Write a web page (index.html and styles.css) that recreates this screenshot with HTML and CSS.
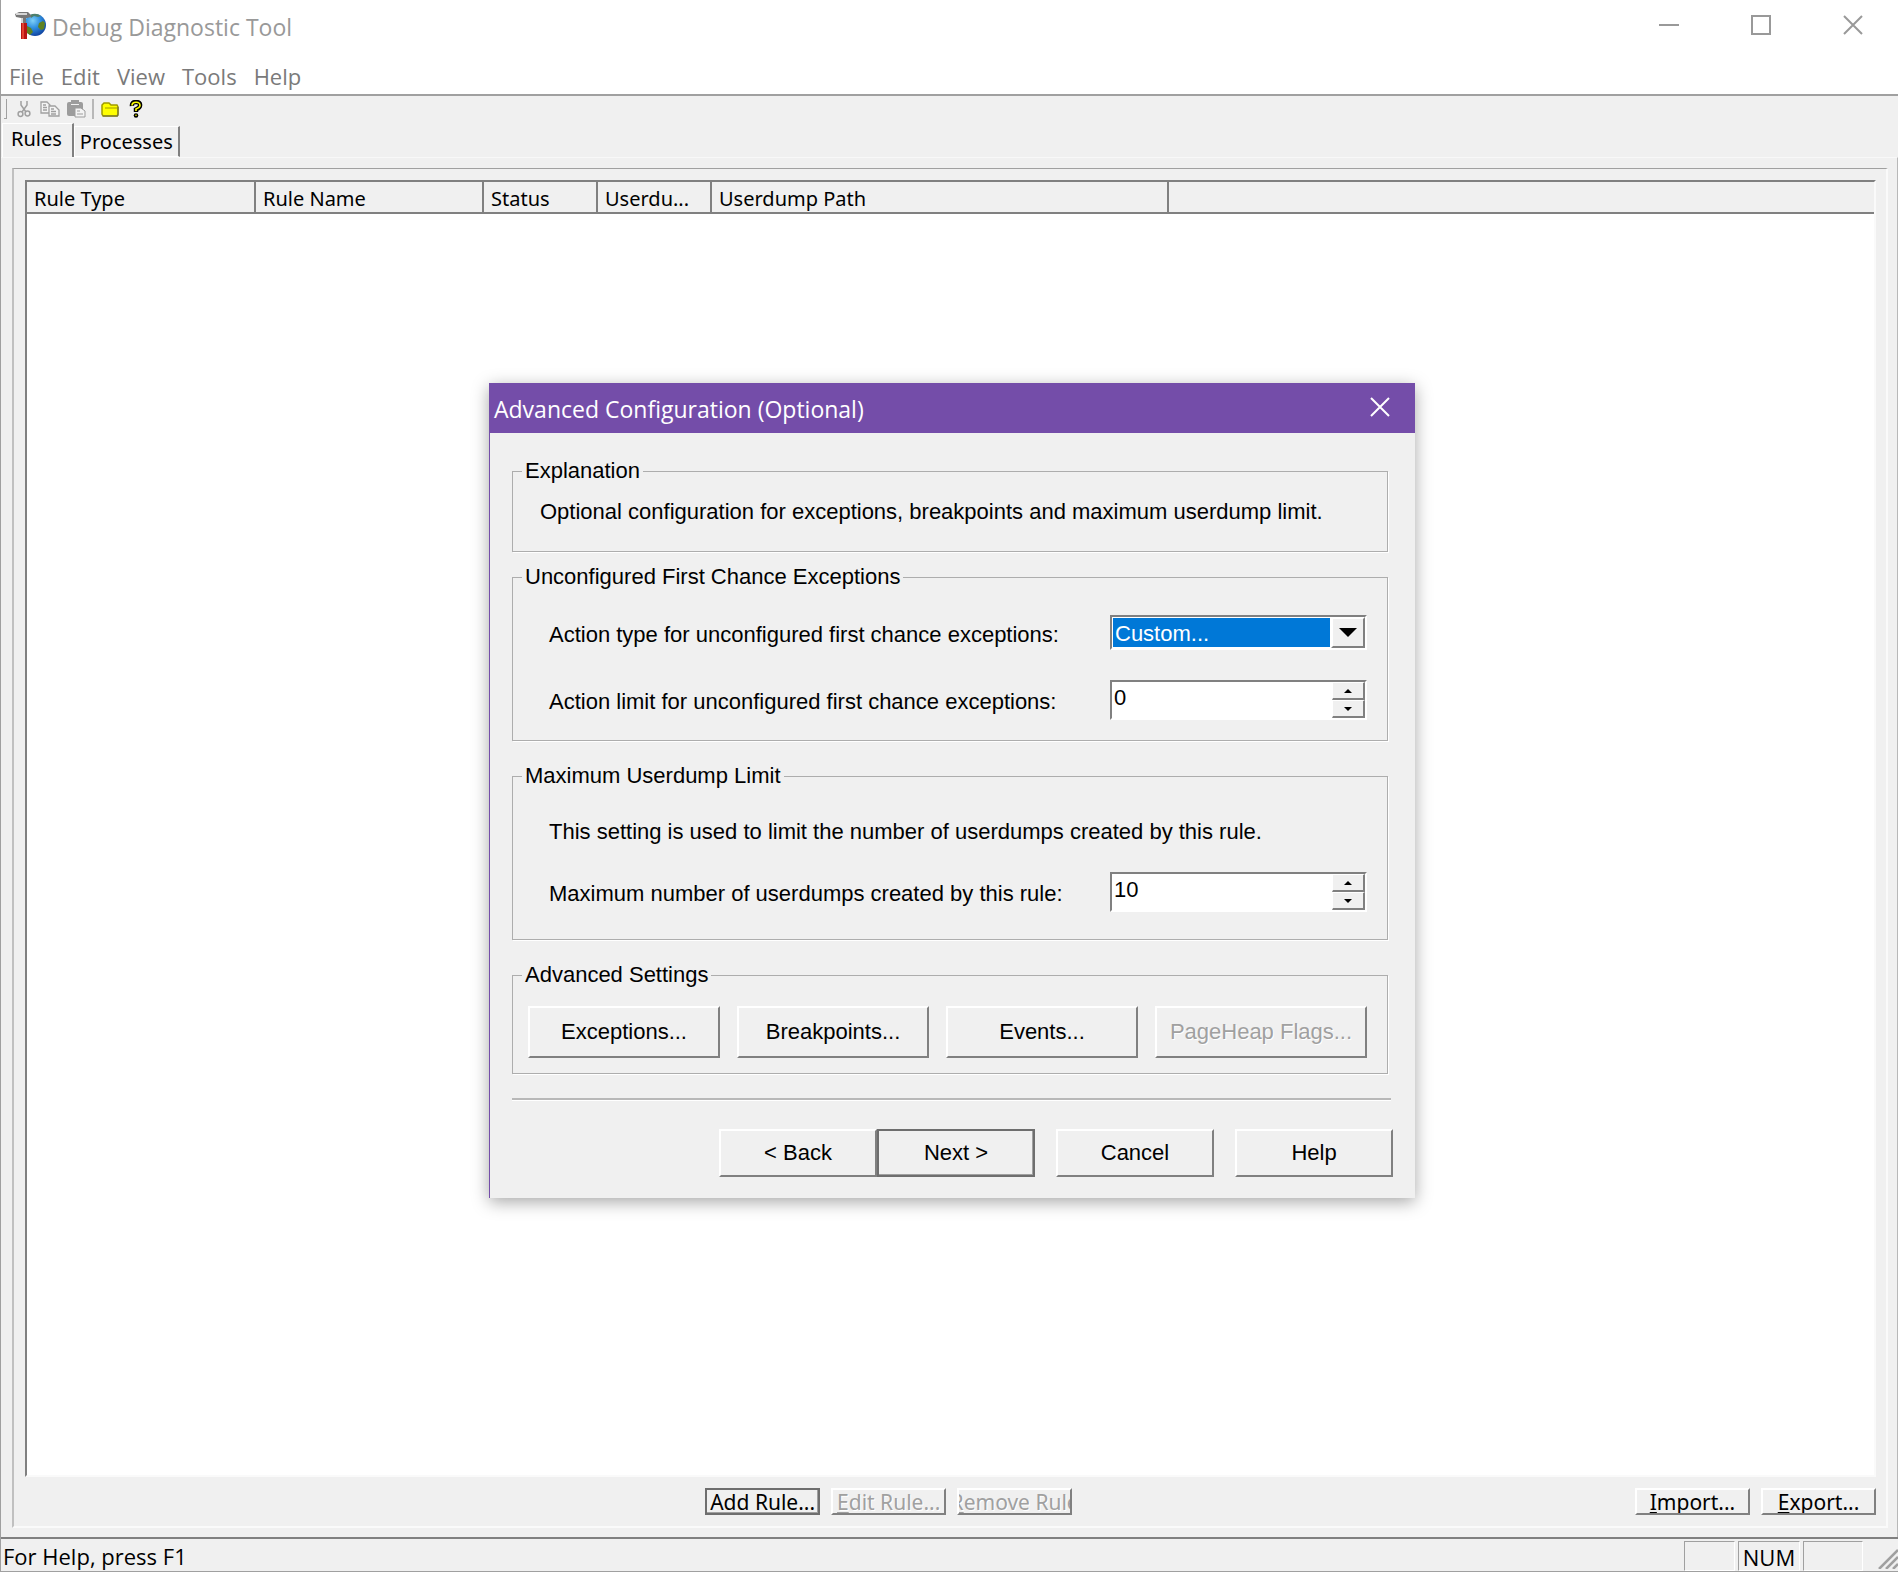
FILE: index.html
```html
<!DOCTYPE html>
<html lang="en">
<head>
<meta charset="utf-8">
<title>Debug Diagnostic Tool</title>
<link rel="stylesheet" href="styles.css">
</head>
<body>
<div class="window">
  <header class="titlebar">
    <svg class="app-icon" viewBox="0 0 32 30" aria-hidden="true">
      <defs><radialGradient id="globe" cx=".4" cy=".3" r=".75"><stop offset="0" stop-color="#7fd0f5"/><stop offset=".45" stop-color="#2f8fe0"/><stop offset="1" stop-color="#0d3c9a"/></radialGradient></defs>
      <circle cx="20" cy="14" r="11" fill="url(#globe)"/>
      <path d="M15 4q6-3 11 1l-3 1-4-1-3 2z" fill="#4f7f6a"/>
      <path d="M12 15l4 2 2 4-3 3-3-2zM24 12l4-2 2 2-1 6-3 1-3-3z" fill="#5f8220"/>
      <path d="M0 3l4-2h9l3 3v2l-4 1h-1v6H6V7L1 6z" fill="#777"/>
      <path d="M1 3h11M7 7v5" stroke="#d5d5d5" stroke-width="2"/>
      <path d="M6 12h6v16H6z" fill="#b81414"/><path d="M7 12h2v16H7z" fill="#e0402f"/>
    </svg>
    <h1 class="title">Debug Diagnostic Tool</h1>
    <div class="window-controls">
      <button class="window-button" aria-label="Minimize"><svg viewBox="0 0 20 20"><path d="M0 10h20" /></svg></button>
      <button class="window-button" aria-label="Maximize"><svg viewBox="0 0 20 20"><path d="M1 1h18v18H1z"/></svg></button>
      <button class="window-button" aria-label="Close"><svg viewBox="0 0 20 20"><path d="M1 1l18 18M19 1L1 19"/></svg></button>
    </div>
  </header>
  <nav class="menubar">
    <a href="#">File</a><a href="#">Edit</a><a href="#">View</a><a href="#">Tools</a><a href="#">Help</a>
  </nav>
  <div class="toolbar">
    <span class="toolbar-grip"></span>
    <button class="tool" aria-label="Cut"><svg viewBox="0 0 20 18"><g fill="none" stroke="#a0a0a0" stroke-width="1.5"><path d="M7 1v4l5 7M13 1v4l-5 7"/><circle cx="6.5" cy="14" r="2.4"/><circle cx="13.5" cy="13.5" r="2.4"/></g></svg></button>
    <button class="tool" aria-label="Copy"><svg viewBox="0 0 20 18"><g fill="#f4f4f4" stroke="#a0a0a0" stroke-width="1.3"><path d="M1 2h6l3 3v8H1z"/><path d="M9 6h6l4 4v6H9z"/><path d="M3 5h3M3 7.5h4M3 10h4M11 9h3M11 11.500h5M11 14h5"/></g></svg></button>
    <button class="tool" aria-label="Paste"><svg viewBox="0 0 20 18"><rect x="1" y="2" width="16" height="14" rx="2" fill="#9c9c9c"/><path d="M6 3V1h6v2" fill="none" stroke="#9c9c9c" stroke-width="2"/><path d="M5 4.5h8" stroke="#f0f0f0"/><path d="M9 8h6l4 3v6H9z" fill="#f4f4f4" stroke="#9c9c9c"/><path d="M11 11h3M11 14h6" stroke="#9c9c9c"/></svg></button>
    <span class="toolbar-separator"></span>
    <button class="tool" aria-label="Open folder"><svg viewBox="0 0 20 18"><path d="M2 14V5l2-2h5l2 2h6l1 2v7l-1 2H3z" fill="#ff0" stroke="#a09a00" stroke-width="1.5"/><path d="M5 8h12" stroke="#a09a00"/><path d="M3 16h15V7" fill="none" stroke="#6a6a3a"/></svg></button>
    <button class="tool" aria-label="Help"><svg viewBox="0 0 20 18"><path d="M6 6q-.5-4 4-4t4 3.5q0 2-4 4V12" fill="none" stroke="#000" stroke-width="4.5"/><path d="M6 5.5q0-3 4-3.2t4 3.2q0 2-4 3.5V11" fill="none" stroke="#ff0" stroke-width="1.6"/><circle cx="10" cy="15.5" r="2.3"/><circle cx="10" cy="15.3" r=".8" fill="#ff0"/></svg></button>
  </div>
  <div class="tabs" role="tablist">
    <button class="tab tab-active" role="tab" aria-selected="true">Rules</button>
    <button class="tab" role="tab" aria-selected="false">Processes</button>
  </div>
  <main class="tab-page">
    <section class="frame">
      <div class="list">
        <table class="rules">
          <colgroup><col class="col-wide"><col class="col-wide"><col class="col-narrow"><col class="col-narrow"><col class="col-path"><col></colgroup>
          <thead><tr><th>Rule Type</th><th>Rule Name</th><th>Status</th><th>Userdu...</th><th>Userdump Path</th><th></th></tr></thead>
        </table>
      </div>
      <div class="actions">
        <div class="action-group action-main">
          <button class="button small default">Add Rule...</button>
          <button class="button small" disabled><span><u>E</u>dit Rule...</span></button>
          <button class="button small" disabled><span><u>R</u>emove Rule</span></button>
        </div>
        <div class="action-group action-end">
          <button class="button small"><span><u>I</u>mport...</span></button>
          <button class="button small"><span><u>E</u>xport...</span></button>
        </div>
      </div>
    </section>
  </main>
  <footer class="statusbar">
    <span class="status-text">For Help, press F1</span>
    <span class="pane"></span><span class="pane pane-num">NUM</span><span class="pane pane-last"></span>
    <svg class="grip" viewBox="0 0 20 20" aria-hidden="true"><path d="M1 20L20 1M8 20L20 8M15 20l5-5" stroke="#a0a0a0" stroke-width="2.5"/></svg>
  </footer>
</div>

<div class="dialog-layer">
  <form class="dialog" role="dialog" aria-labelledby="dialog-title">
    <div class="dialog-titlebar">
      <h2 class="dialog-title" id="dialog-title">Advanced Configuration (Optional)</h2>
      <button type="button" class="dialog-close" aria-label="Close"><svg viewBox="0 0 20 20"><path d="M1 1l18 18M19 1L1 19"/></svg></button>
    </div>
    <div class="dialog-body">
      <fieldset class="group group-explanation">
        <legend>Explanation</legend>
        <p>Optional configuration for exceptions, breakpoints and maximum userdump limit.</p>
      </fieldset>
      <fieldset class="group group-exceptions">
        <legend>Unconfigured First Chance Exceptions</legend>
        <div class="field">
          <label for="action-type">Action type for unconfigured first chance exceptions:</label>
          <span class="combo">
            <select id="action-type"><option>Custom...</option></select>
            <span class="combo-arrow"><svg viewBox="0 0 18 9"><path d="M0 0h18l-9 9z"/></svg></span>
          </span>
        </div>
        <div class="field">
          <label for="action-limit">Action limit for unconfigured first chance exceptions:</label>
          <span class="spinner">
            <input id="action-limit" type="text" inputmode="numeric" value="0">
            <span class="spinner-buttons">
              <button type="button" aria-label="Increase"><svg viewBox="0 0 8 4"><path d="M0 4h8l-4-4z"/></svg></button>
              <button type="button" aria-label="Decrease"><svg viewBox="0 0 8 4"><path d="M0 0h8l-4 4z"/></svg></button>
            </span>
          </span>
        </div>
      </fieldset>
      <fieldset class="group group-limit">
        <legend>Maximum Userdump Limit</legend>
        <p>This setting is used to limit the number of userdumps created by this rule.</p>
        <div class="field">
          <label for="max-dumps">Maximum number of userdumps created by this rule:</label>
          <span class="spinner">
            <input id="max-dumps" type="text" inputmode="numeric" value="10">
            <span class="spinner-buttons">
              <button type="button" aria-label="Increase"><svg viewBox="0 0 8 4"><path d="M0 4h8l-4-4z"/></svg></button>
              <button type="button" aria-label="Decrease"><svg viewBox="0 0 8 4"><path d="M0 0h8l-4 4z"/></svg></button>
            </span>
          </span>
        </div>
      </fieldset>
      <fieldset class="group group-advanced">
        <legend>Advanced Settings</legend>
        <div class="advanced-buttons">
          <button type="button" class="button">Exceptions...</button>
          <button type="button" class="button">Breakpoints...</button>
          <button type="button" class="button">Events...</button>
          <button type="button" class="button" disabled>PageHeap Flags...</button>
        </div>
      </fieldset>
      <hr class="rule-line">
      <div class="wizard-buttons">
        <div class="step-buttons">
          <button type="button" class="button">&lt; Back</button>
          <button type="submit" class="button default">Next &gt;</button>
        </div>
        <button type="button" class="button">Cancel</button>
        <button type="button" class="button">Help</button>
      </div>
    </div>
  </form>
</div>
</body>
</html>
```
FILE: styles.css
```css
* { box-sizing: border-box; }
html, body { height: 100%; margin: 0; }
body {
  --face: #f0f0f0;
  --dark: #808080;
  --mid: #a0a0a0;
  --ui: "Open Sans", "Noto Sans", sans-serif;
  --list: "Noto Sans", "Open Sans", sans-serif;
  --dialog: "Liberation Sans", Arial, sans-serif;
  position: relative;
  background: var(--face);
  color: #000;
  font: 20px/24px var(--list);
}
h1, h2, p { margin: 0; font-weight: 400; }
button, input, select { margin: 0; font: inherit; color: inherit; }
button { padding: 0; border: 0; background: none; }
svg { display: block; }

.window {
  display: flex;
  flex-direction: column;
  min-height: 100%;
  border-left: 1px solid #a0a0a0;
  border-bottom: 1px solid #a0a0a0;
}

.titlebar {
  display: flex;
  align-items: center;
  height: 56px;
  padding: 0 0 2px 14px;
  background: #fff;
}
.app-icon { width: 32px; height: 30px; margin-bottom: 2px; }
.title { flex: 1; padding-left: 5px; color: #999; font: 23px/32px var(--ui); }
.window-controls { display: flex; align-self: flex-start; height: 50px; }
.window-button { display: grid; place-items: center; width: 92px; }
.window-button svg { width: 20px; height: 20px; fill: none; stroke: #999; stroke-width: 2; }
.window-button:last-child { width: 91px; }

.menubar {
  display: flex;
  gap: 17px;
  height: 40px;
  padding: 4px 8px;
  border-bottom: 2px solid var(--mid);
  background: #fff;
  font: 22px/32px var(--ui);
}
.menubar a { color: #7a7a7a; text-decoration: none; }

.toolbar { display: flex; align-items: center; height: 27px; padding: 0 5px 2px 3px; }
.toolbar-grip { width: 3px; height: 20px; margin-right: 4px; border-right: 1px solid var(--mid); border-bottom: 1px solid var(--mid); }
.toolbar-separator { width: 2px; height: 20px; margin: 0 3px; background: #b8b8b8; }
.tool { display: grid; place-items: center; width: 26px; height: 24px; }
.tool svg { width: 20px; height: 18px; }

.tabs { display: flex; align-items: flex-end; height: 34px; padding-left: 1px; }
.tab {
  height: 31px;
  padding: 0 5px;
  border: 1px solid #fff;
  border-right: 2px solid var(--dark);
}
.tab-active { height: 34px; padding: 0 10px 4px 8px; border-bottom: 0; }

.tab-page {
  display: flex;
  flex: 1;
  flex-direction: column;
  padding: 10px 9px 9px 11px;
  border-top: 1px solid #f8f8f8;
  border-right: 1px solid #b8b8b8;
}
.frame {
  display: flex;
  flex: 1;
  flex-direction: column;
  padding: 11px 10px 11px 11px;
  border: 2px solid #fafafa;
  border-top: 1px solid var(--mid);
  border-left: 2px solid #c0c0c0;
}
.list {
  flex: 1;
  border: 2px solid #fafafa;
  border-top-color: var(--dark);
  border-left-color: var(--dark);
  background: #fff;
}
.rules { width: 100%; table-layout: fixed; border-collapse: collapse; }
.rules th {
  height: 31px;
  padding: 3px 7px 0;
  border-right: 2px solid var(--dark);
  border-bottom: 2px solid var(--dark);
  background: var(--face);
  font-weight: 400;
  text-align: left;
}
.rules th:last-child { border-right: 0; }
.col-wide { width: 228px; }
.col-narrow { width: 114px; }
.col-path { width: 457px; }

.actions { display: grid; grid-template-columns: 11fr auto 13fr; padding-top: 11px; font-size: 21px; }
.action-group { display: flex; gap: 11px; }
.action-main { grid-column: 2; }
.action-end { justify-content: flex-end; }

.button {
  display: flex;
  align-items: center;
  justify-content: center;
  height: 48px;
  overflow: hidden;
  border: 2px solid #fff;
  border-right-color: var(--dark);
  border-bottom-color: var(--dark);
  background: var(--face);
  white-space: nowrap;
}
.button:disabled { color: var(--mid); text-shadow: 1px 1px 0 #fff; }
.default {
  border-color: #fff var(--mid) var(--mid) #fff;
  outline: 2px solid #6e6e6e;
  outline-offset: -2px;
  box-shadow: inset -1px -1px 0 var(--mid);
}
.small { width: 115px; height: 27px; }

.statusbar {
  display: flex;
  gap: 3px;
  height: 34px;
  padding-left: 2px;
  border-top: 2px solid var(--dark);
  font: 22px/34px var(--ui);
}
.status-text { flex: 1; }
.pane { width: 51px; margin-top: 2px; border: 1px solid #fff; border-top-color: var(--mid); border-left-color: var(--mid); line-height: 30px; text-align: center; }
.pane-num { width: 62px; }
.pane-last { width: 60px; }
.grip { width: 20px; height: 20px; margin: 10px 0 0 12px; }

.dialog-layer {
  position: absolute;
  inset: 9px 0 0 6px;
  display: grid;
  place-items: center;
}
.dialog {
  width: 926px;
  border-left: 1px solid #744da9;
  background: var(--face);
  box-shadow: 0 4px 16px rgba(0, 0, 0, .35);
  font: 22px/24px var(--dialog);
}
.dialog-titlebar { display: flex; height: 50px; padding-left: 4px; background: #744da9; color: #fff; }
.dialog-title { flex: 1; font: 23px/52px var(--ui); }
.dialog-close { display: grid; place-items: center; width: 70px; height: 48px; }
.dialog-close svg { width: 20px; height: 20px; stroke: #fff; stroke-width: 2; }
.dialog-body { padding: 26px 22px 21px; }

.group {
  min-width: 0;
  margin: 0 5px 23px 0;
  padding: 0 20px 0 36px;
  border: 1px solid #adadad;
  box-shadow: 1px 1px 0 #fff;
}
.group legend { margin-left: -27px; padding: 0 3px; background: var(--face); }
.group-explanation { margin-bottom: 13px; padding: 17px 20px 27px 27px; }
.group-exceptions { padding-top: 26px; padding-bottom: 20px; }
.group-limit { padding-top: 32px; padding-bottom: 27px; }
.group-limit p { margin-bottom: 28px; }
.group-advanced { padding: 19px 20px 15px 15px; }
.group-explanation legend { margin-left: -18px; }
.group-advanced legend { margin-left: -6px; }

.field { display: flex; align-items: center; justify-content: space-between; }
.field + .field { margin-top: 30px; }
.field label { padding-top: 4px; }
.combo, .spinner {
  display: flex;
  width: 257px;
  border: 2px solid #fff;
  border-top-color: var(--dark);
  border-left-color: var(--dark);
  background: #fff;
}
.combo { height: 35px; }
.spinner { height: 40px; }
.combo select {
  flex: 1;
  min-width: 0;
  margin: 1px;
  padding: 2px 2px 0;
  border: 0;
  outline: 0;
  appearance: none;
  background: #0078d7;
  color: #fff;
}
.combo-arrow { display: grid; place-items: center; width: 34px; border: 2px solid #fff; border-right-color: var(--dark); border-bottom-color: var(--dark); background: var(--face); }
.combo-arrow svg { width: 18px; height: 9px; }
.spinner input { flex: 1; min-width: 0; padding: 0 2px 5px; border: 0; outline: 0; background: none; }
.spinner-buttons { display: flex; flex-direction: column; width: 33px; }
.spinner-buttons button { display: grid; flex: 1; place-items: center; border: 1px solid #fff; border-right: 2px solid var(--dark); border-bottom: 2px solid var(--dark); background: var(--face); }
.spinner-buttons svg { width: 8px; height: 4px; }

.advanced-buttons { display: grid; grid-template-columns: repeat(3, 192px) 1fr; gap: 17px; }
.advanced-buttons .button { height: 52px; }
.rule-line { height: 3px; margin: 24px 2px 28px 0; border: 0; border-top: 2px solid #b8b8b8; border-bottom: 1px solid #fff; }
.wizard-buttons { display: flex; justify-content: flex-end; gap: 21px; }
.wizard-buttons .button { width: 158px; }
.step-buttons { display: flex; }
```
